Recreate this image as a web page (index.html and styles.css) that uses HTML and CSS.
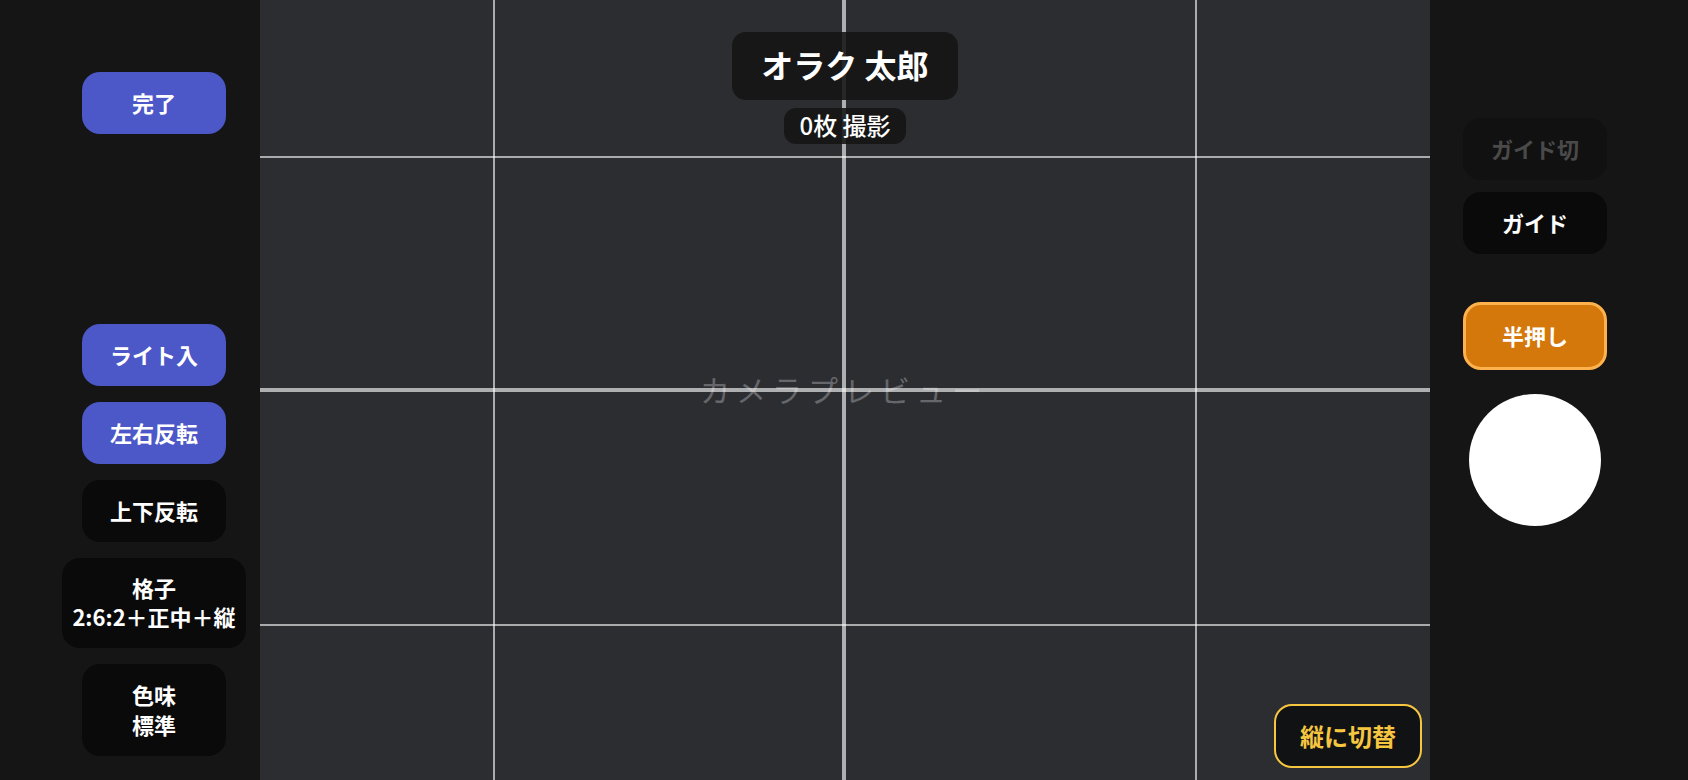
FILE: index.html
```html
<!DOCTYPE html>
<html lang="ja">
<head>
<meta charset="utf-8">
<title>カメラ</title>
<link rel="stylesheet" href="styles.css">
</head>
<body>
<div class="app">
  <aside class="panel panel-left">
    <button class="btn btn-blue">完了</button>
    <div class="stack">
      <button class="btn btn-blue">ライト入</button>
      <button class="btn btn-blue">左右反転</button>
      <button class="btn btn-black">上下反転</button>
      <button class="btn btn-black btn-grid">格子<br>2:6:2＋正中＋縦</button>
      <button class="btn btn-black">色味<br>標準</button>
    </div>
  </aside>

  <main class="camera">
    <div class="preview-label">カメラプレビュー</div>
    <div class="grid">
      <div class="gl h h20"></div>
      <div class="gl h h50"></div>
      <div class="gl h h80"></div>
      <div class="gl v v20"></div>
      <div class="gl v v50"></div>
      <div class="gl v v80"></div>
    </div>
    <div class="header">
      <div class="name">オラク 太郎</div>
      <div class="count">0枚 撮影</div>
    </div>
    <button class="btn-orient">縦に切替</button>
  </main>

  <aside class="panel panel-right">
    <button class="btn btn-dim">ガイド切</button>
    <button class="btn btn-black gap-s">ガイド</button>
    <button class="btn btn-orange">半押し</button>
    <button class="shutter" aria-label="撮影"></button>
  </aside>
</div>
</body>
</html>
```

FILE: styles.css
```css
* { box-sizing: border-box; }
html, body {
  margin: 0;
  padding: 0;
  background: #151515;
  font-family: "Noto Sans CJK JP", "Noto Sans", sans-serif;
}
.app {
  display: flex;
  width: 1688px;
  height: 780px;
  overflow: hidden;
}
.panel {
  background: #151515;
  display: flex;
  flex-direction: column;
  align-items: center;
}
.panel-left {
  width: 260px;
  padding: 72px 0 24px 48px;
  justify-content: space-between;
}
.panel-right {
  width: 258px;
  padding: 118px 48px 0 0;
}
.stack {
  display: flex;
  flex-direction: column;
  align-items: center;
  gap: 16px;
}
.btn {
  font-family: inherit;
  min-width: 144px;
  border: 0;
  border-radius: 18px;
  padding: 15px 10px 17px;
  font-size: 22px;
  line-height: 30px;
  font-weight: 700;
  color: #fff;
  text-align: center;
  white-space: nowrap;
}
.btn-grid { line-height: 29px; }
.btn-blue { background: #4c57c8; }
.btn-black { background: #0a0a0a; }
.btn-dim { background: #111111; color: #4a4a4a; }
.gap-s { margin-top: 12px; }
.btn-orange {
  margin-top: 48px;
  background: #d4780b;
  border: 3px solid #fdb24e;
}
.shutter {
  margin-top: 24px;
  width: 132px;
  height: 132px;
  border-radius: 50%;
  background: #fff;
  border: 0;
  padding: 0;
}

.camera {
  position: relative;
  width: 1170px;
  height: 780px;
  background: #2c2d31;
  display: flex;
  align-items: center;
  justify-content: center;
}
.preview-label {
  font-size: 30px;
  letter-spacing: 6px;
  color: #66676b;
  margin-top: -2px;
  margin-right: 2px;
}
.grid { position: absolute; inset: 0; pointer-events: none; }
.gl { position: absolute; background: rgba(255,255,255,0.6); }
.h { left: 0; right: 0; height: 2px; }
.v { top: 0; bottom: 0; width: 2px; }
.h20 { top: 156px; }
.h80 { top: 624px; }
.h50 { top: 388px; height: 4px; background: rgba(255,255,255,0.62); }
.v20 { left: 233px; }
.v80 { left: 935px; }
.v50 { left: 582px; width: 4px; background: rgba(255,255,255,0.62); }

.header {
  position: absolute;
  top: 32px;
  left: 0;
  right: 0;
  display: flex;
  flex-direction: column;
  align-items: center;
  gap: 8px;
}
.name {
  background: rgba(20,20,21,0.88);
  color: #fff;
  font-size: 32px;
  font-weight: 700;
  line-height: 44px;
  height: 68px;
  padding: 10px 29px 14px;
  border-radius: 14px;
}
.count {
  background: rgba(20,20,21,0.88);
  color: #fff;
  font-size: 24px;
  font-weight: 500;
  line-height: 28px;
  height: 36px;
  padding: 3px 15px 5px;
  border-radius: 12px;
}
.btn-orient {
  position: absolute;
  right: 8px;
  bottom: 12px;
  width: 148px;
  height: 64px;
  background: #111214;
  border: 2px solid #f6c640;
  border-radius: 18px;
  color: #f6c640;
  font-family: inherit;
  font-size: 24px;
  font-weight: 700;
  padding: 0 0 2px;
}
```
